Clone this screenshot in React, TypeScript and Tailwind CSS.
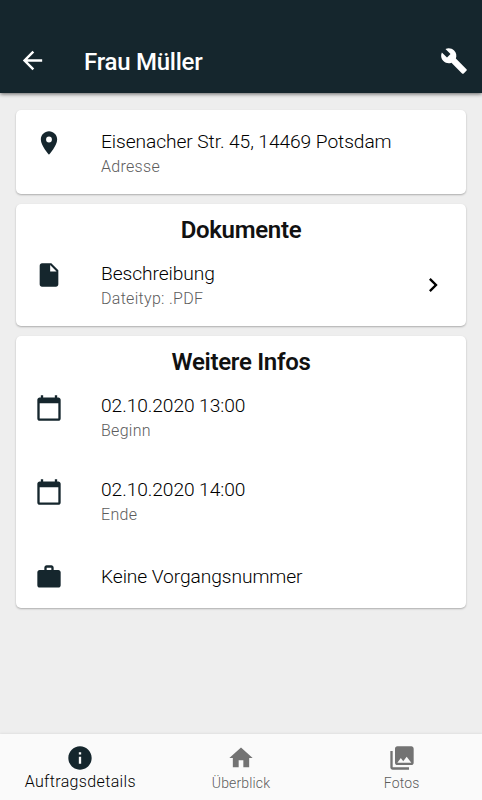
import React from 'react';
import type { IconType } from 'react-icons';
import {
  MdArrowBack,
  MdBuild,
  MdCalendarToday,
  MdChevronRight,
  MdHome,
  MdInfo,
  MdInsertDriveFile,
  MdPhotoLibrary,
  MdPlace,
  MdWork,
} from 'react-icons/md';

interface InfoRowProps {
  icon: IconType;
  title: string;
  subtitle?: string;
  className?: string;
  iconClassName?: string;
  children?: React.ReactNode;
}

const InfoRow: React.FC<InfoRowProps> = ({ icon: Icon, title, subtitle, className = '', iconClassName = 'mt-0.5', children }) => (
  <div className={`flex px-[19px] ${className}`}>
    <Icon size={28} className={`shrink-0 text-[#15262d] ${iconClassName}`} />
    <div className="ml-[38px] flex-1 font-light whitespace-nowrap">
      <div className="text-[19.2px] leading-7 tracking-[-0.08px] text-black">{title}</div>
      {subtitle && <div className="mt-px text-base leading-5 tracking-[0.3px] text-[#5c5c5c]">{subtitle}</div>}
    </div>
    {children}
  </div>
);

const Card: React.FC<{ title?: string; className: string; children: React.ReactNode }> = ({ title, className, children }) => (
  <section className={`rounded-[5px] bg-white shadow-[0_1px_2px_rgba(0,0,0,0.28)] ${className}`}>
    {title && (
      <h2 className="pt-3 text-center text-2xl leading-7 font-semibold tracking-[-0.3px] text-[#111]">{title}</h2>
    )}
    {children}
  </section>
);

export default function App() {
  return (
    <div className="flex h-[800px] w-[482px] flex-col overflow-hidden bg-[#eeeeee] font-['Roboto',sans-serif]">
      <header className="z-10 flex h-[93px] shrink-0 items-end bg-[#15262d] pr-[14px] pb-[18px] pl-[18px] text-white shadow-[0_1px_4px_rgba(0,0,0,0.6)]">
        <MdArrowBack size={29} />
        <h1 className="-mb-px ml-[37px] flex-1 text-2xl leading-7 font-medium tracking-[-0.25px]">Frau Müller</h1>
        <MdBuild size={28} />
      </header>

      <main className="flex flex-1 flex-col gap-[10px] px-4 pt-[17px]">
        <Card className="h-[84px]">
          <InfoRow
            icon={MdPlace}
            title="Eisenacher Str. 45, 14469 Potsdam"
            subtitle="Adresse"
            className="pt-[18px]"
            iconClassName="mt-px"
          />
        </Card>
        <Card title="Dokumente" className="h-[122px]">
          <InfoRow icon={MdInsertDriveFile} title="Beschreibung" subtitle="Dateityp: .PDF" className="pt-4" iconClassName="mt-px">
            <MdChevronRight size={28} className="mt-[11px] text-black" />
          </InfoRow>
        </Card>
        <Card title="Weitere Infos" className="h-[272px]">
          <InfoRow icon={MdCalendarToday} title="02.10.2020 13:00" subtitle="Beginn" className="h-[84px] pt-4" />
          <InfoRow icon={MdCalendarToday} title="02.10.2020 14:00" subtitle="Ende" className="h-[84px] pt-4" />
          <InfoRow icon={MdWork} title="Keine Vorgangsnummer" className="pt-[19px]" iconClassName="" />
        </Card>
      </main>

      <nav className="grid h-[66px] shrink-0 grid-cols-3 bg-[#fafafa] shadow-[0_-1px_2px_rgba(0,0,0,0.06)]">
        <div className="flex flex-col items-center pt-[10px] text-[#15262d]">
          <MdInfo size={28} />
          <span className="text-base leading-5 font-light tracking-[0.35px] text-black">Auftragsdetails</span>
        </div>
        <div className="flex flex-col items-center pt-[10px] text-[#737373]">
          <MdHome size={28} />
          <span className="text-sm leading-[22px] font-light tracking-[0.15px] text-[#5c5c5c]">Überblick</span>
        </div>
        <div className="flex flex-col items-center pt-[10px] text-[#737373]">
          <MdPhotoLibrary size={28} />
          <span className="text-sm leading-[22px] font-light tracking-[0.15px] text-[#5c5c5c]">Fotos</span>
        </div>
      </nav>
    </div>
  );
}
